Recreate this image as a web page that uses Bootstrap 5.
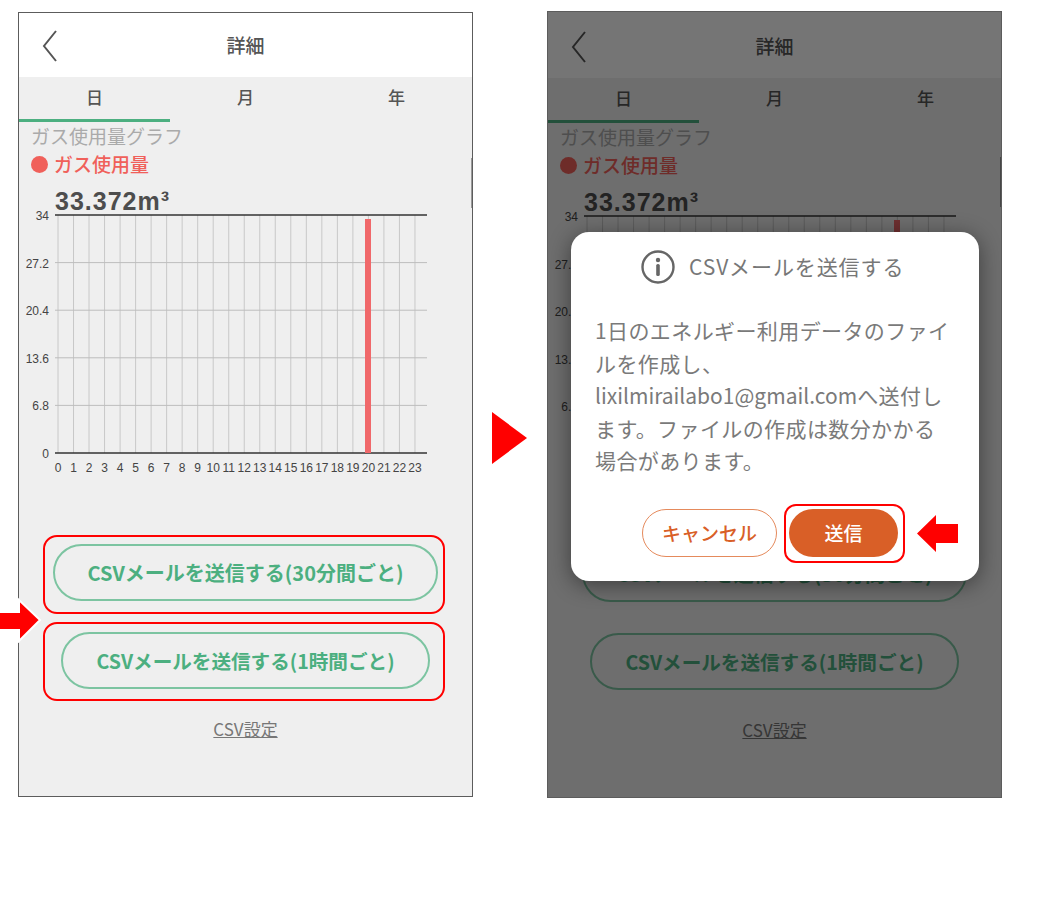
<!DOCTYPE html>
<html lang="ja">
<head>
    <meta charset="UTF-8" />
    <title>詳細</title>
    <link href="https://cdn.jsdelivr.net/npm/bootstrap@5.3.0/dist/css/bootstrap.min.css" rel="stylesheet" />
    <style>
        html, body { background: #fff; }
        body { font-family: "Noto Sans CJK JP", "Liberation Sans", sans-serif; color: #555; width: 1058px; height: 906px; overflow: hidden; position: relative; }
        .stage { padding-left: 18px; gap: 74px; }
        .phone { width: 455px; height: 785px; margin-top: 12px; border: 1px solid #5c5c5c; background: #efefef; position: relative; overflow: hidden; flex: none; }
        .phone-dim { height: 787px; margin-top: 11px; }
        .top-head { height: 64px; background: #fff; position: relative; font-size: 19px; font-weight: 500; color: #555; }
        .phone-dim .top-head { height: 66px; padding-top: 2px; }
        .back-ico { position: absolute; left: 22px; top: 16px; }
        .phone-dim .back-ico { top: 18px; }
        .tab-row { height: 45px; }
        .tab-cell { width: 151px; font-size: 17px; line-height: 39px; text-align: center; font-weight: 500; color: #555; border-bottom: 3px solid transparent; }
        .tab-cell.on { border-bottom-color: #4caf80; }
        .graph-title { padding-left: 12px; height: 29px; line-height: 27px; font-size: 19px; color: #aaa; }
        .legend-row { padding-left: 12px; padding-bottom: 2px; height: 29px; font-size: 19px; color: #f0605a; font-weight: 500; gap: 6px; }
        .legend-dot { width: 17px; height: 17px; border-radius: 50%; background: #f0605a; }
        .value-txt { margin-top: 9px; padding-left: 36px; height: 21px; line-height: 24px; font-family: "Liberation Sans", sans-serif; font-weight: 700; font-size: 25px; letter-spacing: 1px; color: #4d4d4d; }
        .graph-svg { display: block; }
        .graph-svg text { font-family: "Liberation Sans", sans-serif; font-size: 12px; fill: #444; }
        .mark-box { width: 402px; height: 79px; border: 2px solid transparent; border-radius: 14px; margin-left: 24px; }
        .mark-box.is-marked { border-color: #f00; }
        .box-a { margin-top: 55px; margin-bottom: 8px; }
        .csv-btn { display: block; height: 57px; border: 2px solid #7cc4a1; border-radius: 29px; background: transparent; color: #4caf80; font-weight: 700; padding: 0; }
        .csv-btn:hover { background: transparent; color: #4caf80; border-color: #7cc4a1; }
        .csv-long { width: 385px; margin: 7px 0 0 8px; font-size: 20px; }
        .csv-short { width: 369px; margin: 8px 0 0 16px; font-size: 19.6px; }
        .csv-link { margin-top: 16px; line-height: 24px; font-size: 17px; color: #777; text-decoration: underline; text-align: center; }
        .scroll-thumb { position: absolute; right: 0; top: 145px; width: 1.5px; height: 50px; background: #999; }
        .dim-layer { position: absolute; inset: 0; background: rgba(0, 0, 0, .54); }
        .dlg-box { position: absolute; left: 23px; top: 220px; width: 408px; height: 349px; border: 0; border-radius: 18px; background: #fff; box-shadow: 0 4px 22px rgba(0, 0, 0, .45); padding: 0 24px; }
        .dlg-head { height: 70px; padding-left: 46px; gap: 14px; font-size: 21px; color: #777; letter-spacing: .9px; }
        .dlg-text { margin-top: 12px; font-size: 21px; line-height: 32.6px; color: #7a7a7a; letter-spacing: .4px; width: 360px; }
        .mail-txt { letter-spacing: 0; }
        .dlg-foot { margin-top: 32px; gap: 12px; padding-left: 47px; }
        .pill-cancel, .pill-send { height: 48px; border-radius: 24px; font-size: 19px; font-weight: 500; padding: 0; }
        .pill-cancel { width: 135px; background: #fff; color: #d95f27; border: 1.5px solid #e58a5c; }
        .pill-send { display: block; width: 109px; background: #d95f27; color: #fff; border: 0; }
        .send-mark { padding: 3px; border: 2px solid #f00; border-radius: 12px; margin-top: -5px; margin-left: -5px; width: 121px; height: 59px; }
        .red-arrow { position: absolute; }
        .arrow-left-phone { left: 0; top: 597px; }
        .arrow-mid { left: 492px; top: 412px; }
        .arrow-send { left: 917px; top: 515px; }
    </style>
</head>
<body>

<div class="stage d-flex align-items-start" id="escena"></div>

<!-- Flechas rojas sobre la captura -->
<svg class="red-arrow arrow-left-phone" width="42" height="46" viewBox="0 0 42 46">
    <polygon points="-4,15 19,15 19,3 40,23 19,44 19,33 -4,33" fill="#f00" stroke="#fff" stroke-width="2"/>
</svg>
<svg class="red-arrow arrow-mid" width="35" height="52" viewBox="0 0 35 52">
    <polygon points="0,0 35,26 0,52" fill="#f00"/>
</svg>
<svg class="red-arrow arrow-send" width="41" height="37" viewBox="0 0 41 37">
    <polygon points="0,18.5 19,0 19,9 41,9 41,28 19,28 19,37" fill="#f00"/>
</svg>

<script>
    (() => {
        const escena = document.getElementById('escena');

        const dibujarGrafica = () => {
            const arriba = 5, abajo = 243;
            let g = '';
            for (let i = 0; i < 24; i++) {
                const x = 39 + i * 15.52;
                g += `<line x1="${x}" y1="${arriba}" x2="${x}" y2="${abajo}" stroke="#c8c8c8" stroke-width="1"/>`;
                g += `<text x="${x}" y="${abajo + 19}" text-anchor="middle">${i}</text>`;
            }
            ['34', '27.2', '20.4', '13.6', '6.8', '0'].forEach((v, i) => {
                const y = arriba + i * 47.6;
                const borde = i === 0 || i === 5;
                g += `<line x1="36" y1="${y}" x2="408" y2="${y}" stroke="${borde ? '#333' : '#bdbdbd'}" stroke-width="${borde ? 1.5 : 1}"/>`;
                g += `<text x="30" y="${y + 5}" text-anchor="end">${v}</text>`;
            });
            g += `<rect x="346" y="9" width="6" height="234" fill="#f0686a"/>`;
            return `<svg class="graph-svg" width="453" height="270" viewBox="0 0 453 270">${g}</svg>`;
        };

        const dibujarDialogo = () => `
            <div class="dim-layer"></div>
            <div class="card dlg-box">
                <div class="dlg-head d-flex align-items-center">
                    <svg width="34" height="34" viewBox="0 0 34 34">
                        <circle cx="17" cy="17" r="15.5" fill="none" stroke="#666" stroke-width="2.4"/>
                        <circle cx="17" cy="10" r="2.2" fill="#666"/>
                        <rect x="15.2" y="14" width="3.6" height="12" rx="1.6" fill="#666"/>
                    </svg>
                    <span>CSVメールを送信する</span>
                </div>
                <div class="dlg-text">1日のエネルギー利用データのファイルを作成し、<span class="mail-txt">lixilmirailabo1@gmail.com</span>へ送付します。ファイルの作成は数分かかる場合があります。</div>
                <div class="dlg-foot d-flex align-items-start">
                    <button class="btn pill-cancel">キャンセル</button>
                    <div class="send-mark"><button class="btn pill-send">送信</button></div>
                </div>
            </div>`;

        const dibujarTelefono = (conDialogo) => `
            <div class="phone ${conDialogo ? 'phone-dim' : ''}">
                <div class="top-head d-flex align-items-center justify-content-center">
                    <svg class="back-ico" width="18" height="34" viewBox="0 0 18 34">
                        <polyline points="15,2 3,17 15,32" fill="none" stroke="#555" stroke-width="2"/>
                    </svg>
                    詳細
                </div>
                <div class="tab-row d-flex">
                    <div class="tab-cell on">日</div>
                    <div class="tab-cell">月</div>
                    <div class="tab-cell">年</div>
                </div>
                <div class="graph-title">ガス使用量グラフ</div>
                <div class="legend-row d-flex align-items-center"><span class="legend-dot"></span>ガス使用量</div>
                <div class="value-txt">33.372m³</div>
                ${dibujarGrafica()}
                <div class="mark-box box-a ${conDialogo ? '' : 'is-marked'}">
                    <button class="btn csv-btn csv-long">CSVメールを送信する(30分間ごと)</button>
                </div>
                <div class="mark-box ${conDialogo ? '' : 'is-marked'}">
                    <button class="btn csv-btn csv-short">CSVメールを送信する(1時間ごと)</button>
                </div>
                <div class="csv-link">CSV設定</div>
                <div class="scroll-thumb"></div>
                ${conDialogo ? dibujarDialogo() : ''}
            </div>`;

        escena.innerHTML = dibujarTelefono(false) + dibujarTelefono(true);
    })();
</script>
<script src="https://cdn.jsdelivr.net/npm/bootstrap@5.3.0/dist/js/bootstrap.bundle.min.js"></script>
</body>
</html>
